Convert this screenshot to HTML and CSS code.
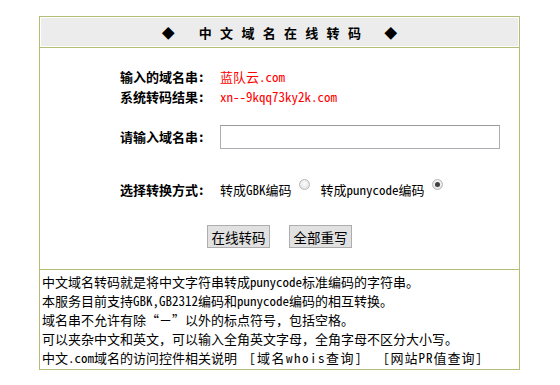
FILE: index.html
```html
<!DOCTYPE html>
<html lang="zh-CN">
<head>
    <meta charset="UTF-8">
    <title>中文域名在线转码</title>
    <link rel="stylesheet" href="styles.css">
</head>
<body>

<div class="panel">
    <!-- 标题栏 -->
    <div class="head">
        <div class="head-in">
            <span class="dia">◆</span>
            <span class="title">中文域名在线转码</span>
            <span class="dia">◆</span>
        </div>
    </div>

    <!-- 转码表单 -->
    <form class="body" onsubmit="return false;">
        <div class="row">
            <span class="lbl">输入的域名串:</span>
            <span class="val">蓝队云.com</span>
        </div>
        <div class="row">
            <span class="lbl">系统转码结果:</span>
            <span class="val">xn--9kqq73ky2k.com</span>
        </div>
        <div class="row row-input">
            <span class="lbl">请输入域名串:</span>
            <input type="text" class="domain" name="domain">
        </div>
        <div class="row row-radio">
            <span class="lbl">选择转换方式:</span>
            <span class="opt">转成GBK编码</span><input type="radio" name="mode" value="gbk" class="radio">
            <span class="opt opt2">转成punycode编码</span><input type="radio" name="mode" value="puny" class="radio" checked>
        </div>
        <div class="btns">
            <button type="submit" class="btn">在线转码</button>
            <button type="reset" class="btn">全部重写</button>
        </div>
    </form>

    <!-- 说明 -->
    <div class="notes">
        <div>中文域名转码就是将中文字符串转成punycode标准编码的字符串。</div>
        <div>本服务目前支持GBK,GB2312编码和punycode编码的相互转换。</div>
        <div>域名串不允许有除“－”以外的标点符号，包括空格。</div>
        <div>可以夹杂中文和英文，可以输入全角英文字母，全角字母不区分大小写。</div>
        <div>中文.com域名的访问控件相关说明<span class="lnk lnk1">[域名whois查询]</span><span class="lnk lnk2">[网站PR值查询]</span></div>
    </div>
</div>

</body>
</html>
```

FILE: styles.css
```css
body {
    margin: 0;
    padding: 16px 0 0 39px;
    font-family: "Noto Sans Mono CJK SC", "Noto Sans CJK SC", monospace;
    font-size: 13px;
    color: #000;
    background: #fff;
}

.panel {
    width: 481px;
    box-sizing: border-box;
    border: 1px solid #b3bd78;
}

/* 标题栏 */
.head {
    padding: 1px;
    border-bottom: 1px solid #b3bd78;
}

.head-in {
    height: 28px;
    background: #ececec;
    display: flex;
    align-items: center;
    justify-content: center;
    font-weight: bold;
}

.dia {
    font-size: 13px;
}

.title {
    letter-spacing: 8.3px;
    margin: 0 15px 0 24px;
}

/* 表单区 */
.body {
    height: 221px;
    margin: 0;
    padding: 19px 0 0 80px;
    box-sizing: border-box;
}

.row {
    display: flex;
    align-items: center;
    height: 20px;
    line-height: 20px;
}

.lbl {
    width: 100px;
    font-weight: bold;
}

.val {
    color: #f00;
}

.row-input {
    margin-top: 18px;
    height: 24px;
}

.domain {
    width: 280px;
    height: 24px;
    box-sizing: border-box;
    border: 1px solid #abadb3;
    border-top-color: #9a9a9a;
    padding: 0 3px;
    margin: 0;
    font: inherit;
}

.row-radio {
    margin-top: 31px;
}

.opt2 {
    margin-left: 11px;
}

.radio {
    appearance: none;
    width: 11px;
    height: 11px;
    margin: 0 0 12px 7px;
    border: 1px solid #b8b8b8;
    border-radius: 50%;
    background: radial-gradient(circle at 50% 40%, #fdfdfd, #dcdcdc);
    box-sizing: border-box;
    position: relative;
}

.radio:checked::after {
    content: "";
    position: absolute;
    left: 2px;
    top: 2px;
    width: 5px;
    height: 5px;
    border-radius: 50%;
    background: #404040;
}

.btns {
    display: flex;
    justify-content: center;
    gap: 19px;
    margin: 25px 0 0 -80px;
}

.btn {
    width: 63px;
    height: 23px;
    padding: 0;
    background: #e1e1e1;
    border: 1px solid #adadad;
    font-family: "Noto Sans CJK SC", sans-serif;
    font-size: 13.5px;
    color: #000;
}

/* 说明 */
.notes {
    border-top: 1px solid #b3bd78;
    padding: 2px 0 2px 2px;
    line-height: 19px;
}

.lnk {
    letter-spacing: 1.5px;
}

.lnk1 {
    margin-left: 12px;
}

.lnk2 {
    margin-left: 20px;
    letter-spacing: 1px;
}
```
